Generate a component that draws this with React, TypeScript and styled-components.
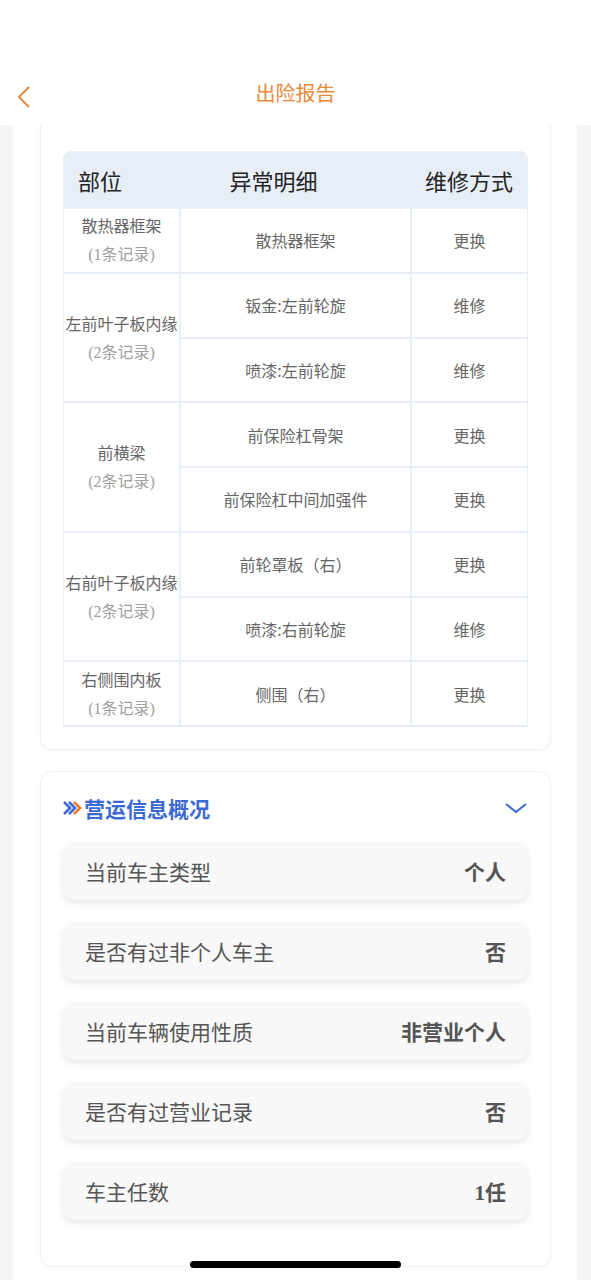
import React from 'react';
import styled, { createGlobalStyle } from 'styled-components';

const GlobalStyle = createGlobalStyle`
  body {
    margin: 0;
    background: #f4f5f7;
    font-family: "Noto Sans CJK SC", "Noto Sans", sans-serif;
  }
`;

const Page = styled.div`
  width: 591px;
  min-height: 1280px;
  display: flex;
  flex-direction: column;
`;

const Header = styled.div`
  height: 125px;
  background: #fff;
  display: flex;
  align-items: flex-start;
  justify-content: center;
  padding-top: 78px;
  box-sizing: border-box;
  position: relative;
`;

const BackButton = styled.div`
  position: absolute;
  left: 14px;
  top: 84px;
  width: 20px;
  height: 24px;
`;

const Title = styled.div`
  font-size: 20px;
  line-height: 30px;
  color: #e8893c;
`;

const Main = styled.div`
  flex: 1;
  margin: 0 14px 0 13px;
  background: #fff;
  padding: 0 26px 40px 27px;
  display: flex;
  flex-direction: column;
  gap: 21px;
`;

const Card = styled.div<{ $cut?: boolean }>`
  background: #fff;
  border: 1px solid #eff0f2;
  border-top: ${(p) => (p.$cut ? 'none' : '1px solid #eff0f2')};
  border-radius: ${(p) => (p.$cut ? '0 0 12px 12px' : '12px')};
  padding: ${(p) => (p.$cut ? '26px 22px 22px' : '21px 22px 46px')};
  box-shadow: 0 1px 4px rgba(0, 0, 0, 0.03);
`;

const Table = styled.div`
  background: #e8eef8;
  border-radius: 8px 8px 0 0;
  padding: 0 1px 2px 1px;
`;

const TableHead = styled.div`
  height: 58px;
  display: flex;
  align-items: center;
  justify-content: space-between;
  padding: 0 14px;
  font-size: 22px;
  color: #222;
`;

const Body = styled.div`
  display: grid;
  grid-template-columns: 115px 1fr 115px;
  grid-auto-rows: 62.75px;
  gap: 2px;
`;

const PartCell = styled.div<{ $span: number }>`
  grid-row: span ${(p) => p.$span};
  background: #fff;
  display: flex;
  flex-direction: column;
  align-items: center;
  justify-content: center;
  font-size: 16px;
  line-height: 30px;
  color: #666;
  white-space: nowrap;
`;

const Count = styled.span`
  font-family: "Liberation Serif", "Noto Sans CJK SC", serif;
  color: #a0a0a0;
`;

const Cell = styled.div<{ $col: number }>`
  grid-column: ${(p) => p.$col};
  background: #fff;
  display: flex;
  align-items: center;
  justify-content: center;
  font-size: 16px;
  color: #666;
`;

const SectionHead = styled.div`
  display: flex;
  align-items: center;
  justify-content: space-between;
  height: 30px;
  margin-bottom: 19px;
`;

const SectionTitle = styled.div`
  display: flex;
  align-items: center;
  gap: 1px;
  font-size: 21px;
  font-weight: 700;
  color: #3a6ad2;
`;

const InfoList = styled.div`
  display: flex;
  flex-direction: column;
  gap: 22px;
`;

const InfoRow = styled.div`
  height: 58px;
  background: #f8f8f8;
  border-radius: 12px;
  box-shadow: 0 3px 6px rgba(0, 0, 0, 0.1);
  display: flex;
  align-items: center;
  justify-content: space-between;
  padding: 0 22px;
  font-size: 21px;
  color: #555;
`;

const Value = styled.span`
  font-family: "Liberation Serif", "Noto Sans CJK SC", serif;
  font-weight: 700;
  color: #555;
`;

const HomeBar = styled.div`
  position: fixed;
  left: 190px;
  bottom: 12px;
  width: 211px;
  height: 7px;
  border-radius: 4px;
  background: #000;
`;

const rows = [
  { part: '散热器框架', items: [['散热器框架', '更换']] },
  {
    part: '左前叶子板内缘',
    items: [
      ['钣金:左前轮旋', '维修'],
      ['喷漆:左前轮旋', '维修'],
    ],
  },
  {
    part: '前横梁',
    items: [
      ['前保险杠骨架', '更换'],
      ['前保险杠中间加强件', '更换'],
    ],
  },
  {
    part: '右前叶子板内缘',
    items: [
      ['前轮罩板（右）', '更换'],
      ['喷漆:右前轮旋', '维修'],
    ],
  },
  { part: '右侧围内板', items: [['侧围（右）', '更换']] },
];

const info = [
  ['当前车主类型', '个人'],
  ['是否有过非个人车主', '否'],
  ['当前车辆使用性质', '非营业个人'],
  ['是否有过营业记录', '否'],
  ['车主任数', '1任'],
];

export default function App() {
  return (
    <Page>
      <GlobalStyle />
      <Header>
        <BackButton>
          <svg width="20" height="24" viewBox="0 0 20 24">
            <path d="M15 3 L5 13 L15 23" fill="none" stroke="#e8893c" strokeWidth="2" />
          </svg>
        </BackButton>
        <Title>出险报告</Title>
      </Header>
      <Main>
        <Card $cut>
          <Table>
            <TableHead>
              <span>部位</span>
              <span>异常明细</span>
              <span>维修方式</span>
            </TableHead>
            <Body>
              {rows.map((r) => (
                <React.Fragment key={r.part}>
                  <PartCell $span={r.items.length}>
                    <span>{r.part}</span>
                    <Count>({r.items.length}条记录)</Count>
                  </PartCell>
                  {r.items.map(([detail, way], i) => (
                    <React.Fragment key={i}>
                      <Cell $col={2}>{detail}</Cell>
                      <Cell $col={3}>{way}</Cell>
                    </React.Fragment>
                  ))}
                </React.Fragment>
              ))}
            </Body>
          </Table>
        </Card>
        <Card>
          <SectionHead>
            <SectionTitle>
              <svg width="20" height="16" viewBox="0 0 20 16">
                <path d="M1 2 L7 8 L1 14" fill="none" stroke="#3a6ad2" strokeWidth="2.6" />
                <path d="M6 2 L12 8 L6 14" fill="none" stroke="#3a6ad2" strokeWidth="2.6" />
                <path d="M11 2 L17 8 L11 14" fill="none" stroke="#ef7a2e" strokeWidth="2.6" />
              </svg>
              营运信息概况
            </SectionTitle>
            <svg width="24" height="14" viewBox="0 0 24 14">
              <path d="M2 3 L12 11 L22 3" fill="none" stroke="#3a6ad2" strokeWidth="2" />
            </svg>
          </SectionHead>
          <InfoList>
            {info.map(([label, value]) => (
              <InfoRow key={label}>
                <span>{label}</span>
                <Value>{value}</Value>
              </InfoRow>
            ))}
          </InfoList>
        </Card>
      </Main>
      <HomeBar />
    </Page>
  );
}
